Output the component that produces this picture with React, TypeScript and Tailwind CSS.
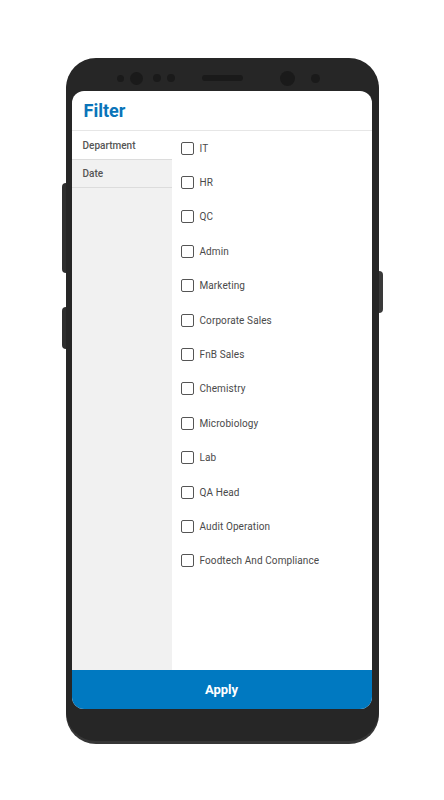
import React from 'react';

const departments = [
  'IT', 'HR', 'QC', 'Admin', 'Marketing', 'Corporate Sales', 'FnB Sales',
  'Chemistry', 'Microbiology', 'Lab', 'QA Head', 'Audit Operation', 'Foodtech And Compliance',
];

export default function App() {
  return (
    <div className="w-[444px] h-[800px] bg-white pt-[58px]" style={{ fontFamily: 'Roboto, "Noto Sans", sans-serif' }}>
      {/* phone body */}
      <div className="relative mx-auto w-[313px] h-[683px] rounded-[30px] bg-[#262626] shadow-[0_3px_0_#363636] px-[6px] flex flex-col">
        {/* side buttons */}
        <span className="absolute left-[-4px] top-[125px] w-[4px] h-[90px] rounded-l-sm bg-[#2e2e2e]" />
        <span className="absolute left-[-4px] top-[249px] w-[4px] h-[42px] rounded-l-sm bg-[#2e2e2e]" />
        <span className="absolute right-[-4px] top-[213px] w-[4px] h-[42px] rounded-r-sm bg-[#3a3a3a]" />

        {/* top bezel */}
        <div className="h-[33px] relative">
          <span className="absolute left-[45px] top-[17px] w-[7px] h-[7px] rounded-full bg-[#1a1a1a]" />
          <span className="absolute left-[58px] top-[14px] w-[13px] h-[13px] rounded-full bg-[#1a1a1a]" />
          <span className="absolute left-[81px] top-[16px] w-[8px] h-[8px] rounded-full bg-[#1a1a1a]" />
          <span className="absolute left-[95px] top-[16px] w-[8px] h-[8px] rounded-full bg-[#1a1a1a]" />
          <span className="absolute left-[130px] top-[17px] w-[41px] h-[6px] rounded-full bg-[#1a1a1a]" />
          <span className="absolute left-[208px] top-[13px] w-[15px] h-[15px] rounded-full bg-[#1a1a1a]" />
          <span className="absolute left-[239px] top-[16px] w-[9px] h-[9px] rounded-full bg-[#1a1a1a]" />
        </div>

        {/* screen */}
        <div className="w-[300px] h-[618px] bg-white rounded-[12px] overflow-hidden flex flex-col">
          <div className="h-[40px] shrink-0 border-b border-[#e6e6e6] flex items-center pl-[12px]">
            <h1 className="text-[18px] font-bold text-[#0a74b9]">Filter</h1>
          </div>

          <div className="flex flex-1 min-h-0">
            <div className="w-[100px] bg-[#f1f1f1] flex flex-col">
              <div className="h-[29px] bg-white border-b border-[#dcdcdc] flex items-center pl-[11px] text-[10px] font-medium text-[#555]">
                Department
              </div>
              <div className="h-[28px] border-b border-[#dcdcdc] flex items-center pl-[11px] text-[10px] font-medium text-[#555]">
                Date
              </div>
            </div>
            <div className="flex-1 flex flex-col pl-[9px]">
              {departments.map((d) => (
                <div key={d} className="h-[34.4px] flex items-center gap-[6px]">
                  <span className="w-[13px] h-[13px] rounded-[2px] border-[1.5px] border-[#555]" />
                  <span className="text-[10px] text-[#4a4a4a] tracking-[0.1px]">{d}</span>
                </div>
              ))}
            </div>
          </div>

          <button className="h-[39px] shrink-0 bg-[#0079c1] text-white text-[13px] font-bold">Apply</button>
        </div>
      </div>
    </div>
  );
}
